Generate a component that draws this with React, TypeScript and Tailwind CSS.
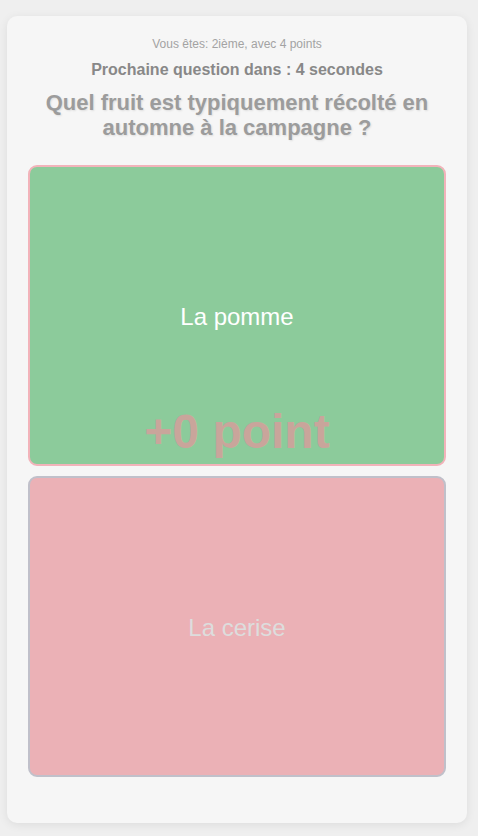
import React from "react";

export default function App() {
  return (
    <div
      className="min-h-[836px] w-full bg-[#efefef] pt-[16px] pb-[13px]"
      style={{ fontFamily: '"Liberation Sans", Arial, sans-serif' }}
    >
      <div className="ml-[7px] w-[460px] rounded-[10px] bg-[#f6f6f6] px-[21px] pt-[21px] pb-[46px] shadow-[0_2px_10px_rgba(0,0,0,0.08)]">
        <p className="text-center text-[12px] leading-[14px] text-[#a3a3a3]">
          Vous êtes: 2ième, avec 4 points
        </p>
        <p className="mt-[9px] text-center text-[16px] font-bold leading-[19px] text-[#888888]">
          Prochaine question dans : 4 secondes
        </p>
        <h2 className="mt-[11px] text-center text-[22px] font-bold leading-[25px] text-[#9c9c9c] [text-shadow:1px_1px_2px_rgba(0,0,0,0.1)]">
          Quel fruit est typiquement récolté en
          <br />
          automne à la campagne ?
        </h2>
        <div className="mt-[25px] flex flex-col gap-[10px]">
          <div className="relative flex h-[301px] items-center justify-center rounded-[9px] border-2 border-[#f2b3ba] bg-[#8ccb9b]">
            <span className="mt-[2px] text-[24px] leading-[28px] text-white">La pomme</span>
            <span className="absolute bottom-[5px] left-0 right-0 text-center text-[48px] font-bold leading-[54px] text-[#c9a59b]">
              +0 point
            </span>
          </div>
          <div className="flex h-[301px] items-center justify-center rounded-[9px] border-2 border-[#c0c0ca] bg-[#ebb1b6]">
            <span className="mt-[2px] text-[24px] leading-[28px] text-[#dddddd]">La cerise</span>
          </div>
        </div>
      </div>
    </div>
  );
}
